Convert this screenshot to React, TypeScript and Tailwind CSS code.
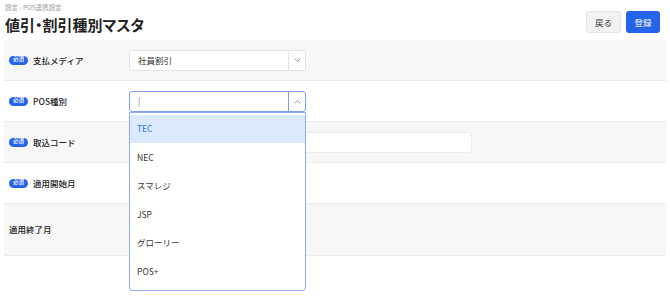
const font = "font-['Noto_Sans_CJK_JP','Noto_Sans',sans-serif]";

const Badge = () => (
  <span className="mr-[5px] inline-flex h-[9px] w-[19px] items-center justify-center rounded-full bg-[#2563eb] text-[5.5px] leading-none text-white">
    必須
  </span>
);

const Chevron = ({ up }: { up?: boolean }) => (
  <svg width="7" height="5" viewBox="0 0 7 5" fill="none">
    <path
      d={up ? "M1 4L3.5 1.5L6 4" : "M1 1L3.5 3.5L6 1"}
      stroke="#8a8a8a"
      strokeWidth="0.9"
      strokeLinecap="round"
      strokeLinejoin="round"
    />
  </svg>
);

const options = ["TEC", "NEC", "スマレジ", "JSP", "グローリー", "POS+"];

const Row = ({
  label,
  required,
  gray,
  tall,
  children,
}: {
  label: string;
  required?: boolean;
  gray?: boolean;
  tall?: boolean;
  children?: React.ReactNode;
}) => (
  <div
    className={`flex items-center border-b border-[#ececec] ${tall ? "h-[52px]" : "h-[41px]"} ${gray ? "bg-[#f7f7f7]" : "bg-white"}`}
  >
    <div className="flex w-[125px] items-center pl-[5px] text-[8.5px] font-medium text-[#222]">
      {required && <Badge />}
      {label}
    </div>
    {children}
  </div>
);

export default function App() {
  return (
    <div className={`h-[306px] w-[670px] bg-white px-1 ${font}`}>
      <header className="flex h-10 items-start justify-between">
        <div className="pl-[1px] pt-[3px]">
          <div className="text-[6.5px] leading-[8px] text-[#9a9a9a]">設定 › POS連携設定</div>
          <h1 className="mt-[4px] text-[15px] font-bold leading-[19px] text-[#222] [font-feature-settings:'palt']">
            値引・割引種別マスタ
          </h1>
        </div>
        <div className="mr-[6px] mt-[11px] flex gap-[5px]">
          <button className="h-[22px] w-[35px] rounded-[3px] border border-[#e4e4e4] bg-[#f2f2f2] text-[8.5px] text-[#333]">
            戻る
          </button>
          <button className="h-[22px] w-[34px] rounded-[3px] bg-[#2563eb] text-[8.5px] text-white">
            登録
          </button>
        </div>
      </header>

      <Row label="支払メディア" required gray>
        <div className="flex h-[21px] w-[177px] items-center rounded-[3px] border border-[#e2e2e2] bg-white">
          <span className="flex-1 pl-[8px] text-[8.5px] text-[#333]">社員割引</span>
          <span className="flex h-full w-[17px] items-center justify-center border-l border-[#e2e2e2]">
            <Chevron />
          </span>
        </div>
      </Row>

      <Row label="POS種別" required>
        <div className="relative h-[21px] w-[177px]">
          <div className="flex h-full items-center rounded-[3px] border border-[#7f9cf0] bg-white">
            <span className="flex-1 pl-[8px] text-[9px] font-light text-[#333]">|</span>
            <span className="flex h-full w-[17px] items-center justify-center border-l border-[#7f9cf0]">
              <Chevron up />
            </span>
          </div>
          <ul className="absolute left-0 top-[21px] z-10 w-[177px] rounded-b-[3px] border border-[#93aaf2] bg-white pb-[4px] pt-[2px]">
            {options.map((o, i) => (
              <li
                key={o}
                className={`flex h-[28.5px] items-center pl-[7px] text-[8.5px] ${i === 0 ? "bg-[#dbeafe] text-[#3b6fe0]" : "text-[#333]"}`}
              >
                {o}
              </li>
            ))}
          </ul>
        </div>
      </Row>

      <Row label="取込コード" required gray>
        <div className="h-[21px] w-[343px] rounded-[3px] border border-[#ececec] bg-white" />
      </Row>

      <Row label="適用開始月" required>
        <div className="h-[21px] w-[120px] rounded-[3px] border border-[#ececec] bg-white" />
      </Row>

      <Row label="適用終了月" gray tall>
        <div className="h-[21px] w-[120px] rounded-[3px] border border-[#ececec] bg-white" />
      </Row>
    </div>
  );
}
